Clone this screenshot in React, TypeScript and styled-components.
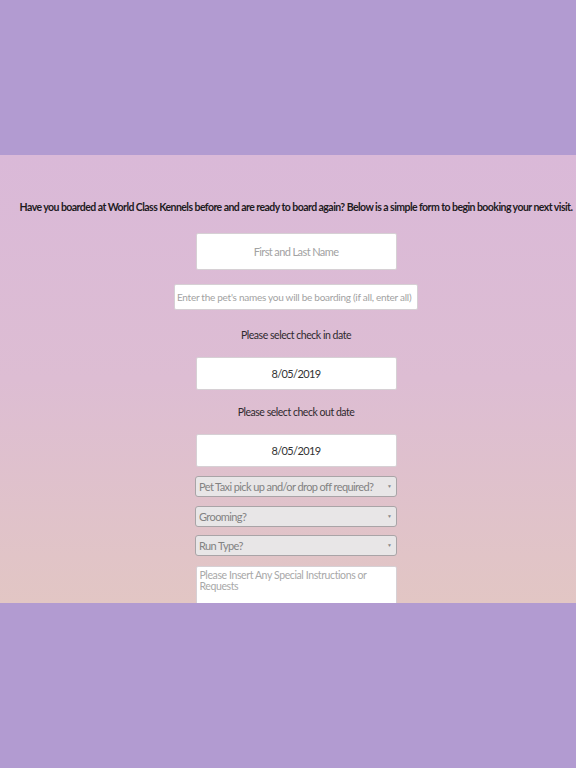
import styled, { createGlobalStyle } from 'styled-components';

const GlobalStyle = createGlobalStyle`
  html, body {
    margin: 0;
    padding: 0;
    background: #b29bd1;
    font-family: Lato, "Liberation Sans", sans-serif;
  }
`;

const Page = styled.div`
  padding-top: 155px;
  height: 768px;
  box-sizing: border-box;
`;

const Band = styled.section`
  height: 448px;
  overflow: hidden;
  background: linear-gradient(to bottom, #dab9d8 0%, #ddbdd3 50%, #e2c6c4 100%);
  padding-left: 16px;
`;

const Intro = styled.p`
  margin: 0;
  padding-top: 45px;
  text-align: center;
  font-size: 10.5px;
  font-weight: 700;
  letter-spacing: -0.55px;
  line-height: 14px;
  color: #1e1a1e;
  white-space: nowrap;
`;

const Form = styled.form`
  display: flex;
  flex-direction: column;
  align-items: center;
  margin-top: 19px;
`;

type FieldProps = { $h: number; $w?: number; $mt?: number };

const TextField = styled.input<FieldProps>`
  display: block;
  box-sizing: border-box;
  width: ${({ $w }) => $w ?? 201}px;
  height: ${({ $h }) => $h}px;
  margin: ${({ $mt }) => $mt ?? 0}px 0 0;
  padding: 0 3px;
  border: 1px solid #d6d0d4;
  border-radius: 2px;
  background: #fff;
  font-family: Lato, "Liberation Sans", sans-serif;
  font-size: 11px;
  letter-spacing: -0.6px;
  color: #333;
  text-align: center;
  outline: none;

  &::placeholder {
    color: #a2a2a2;
  }
`;

const PetsField = styled(TextField)`
  text-align: left;
  font-size: 10px;
  letter-spacing: -0.27px;
  padding: 0 2px;
`;

const Label = styled.div<{ $mt: number }>`
  margin-top: ${({ $mt }) => $mt}px;
  font-size: 10.5px;
  letter-spacing: -0.47px;
  line-height: 14px;
  color: #2f2a2e;
`;

const SelectWrap = styled.div<{ $mt: number }>`
  position: relative;
  width: 202px;
  height: 21px;
  margin-top: ${({ $mt }) => $mt}px;

  &::after {
    content: '▼';
    position: absolute;
    right: 5px;
    top: 7px;
    font-size: 5px;
    line-height: 6px;
    color: #8a8a8a;
    pointer-events: none;
  }
`;

const Select = styled.select`
  display: block;
  appearance: none;
  box-sizing: border-box;
  width: 100%;
  height: 21px;
  padding: 0 3px;
  border: 1px solid #a9a4a7;
  border-radius: 3px;
  background: #e8e6e7;
  font-family: Lato, "Liberation Sans", sans-serif;
  font-size: 11px;
  letter-spacing: -0.6px;
  color: #828282;
  outline: none;
`;

const Notes = styled.textarea`
  display: block;
  box-sizing: border-box;
  width: 201px;
  height: 60px;
  margin-top: 10px;
  padding: 3px 3px;
  border: 1px solid #d6d0d4;
  border-radius: 2px;
  background: #fff;
  font-family: Lato, "Liberation Sans", sans-serif;
  font-size: 10.5px;
  letter-spacing: -0.4px;
  line-height: 11px;
  resize: none;
  outline: none;

  &::placeholder {
    color: #a8a8a8;
  }
`;

const selects = [
  { label: 'Pet Taxi pick up and/or drop off required?', mt: 9 },
  { label: 'Grooming?', mt: 9 },
  { label: 'Run Type?', mt: 8 },
];

export default function App() {
  return (
    <Page>
      <GlobalStyle />
      <Band>
        <Intro>
          Have you boarded at World Class Kennels before and are ready to board again? Below is a simple form to begin booking your next visit.
        </Intro>
        <Form onSubmit={(e) => e.preventDefault()}>
          <TextField $h={37} placeholder="First and Last Name" />
          <PetsField $h={26} $w={244} $mt={14} placeholder="Enter the pet's names you will be boarding (if all, enter all)" />
          <Label $mt={18}>Please select check in date</Label>
          <TextField $h={33} $mt={15} defaultValue="8/05/2019" />
          <Label $mt={15}>Please select check out date</Label>
          <TextField $h={33} $mt={15} defaultValue="8/05/2019" />
          {selects.map((s) => (
            <SelectWrap key={s.label} $mt={s.mt}>
              <Select defaultValue="">
                <option value="" disabled>{s.label}</option>
              </Select>
            </SelectWrap>
          ))}
          <Notes placeholder="Please Insert Any Special Instructions or Requests" />
        </Form>
      </Band>
    </Page>
  );
}
